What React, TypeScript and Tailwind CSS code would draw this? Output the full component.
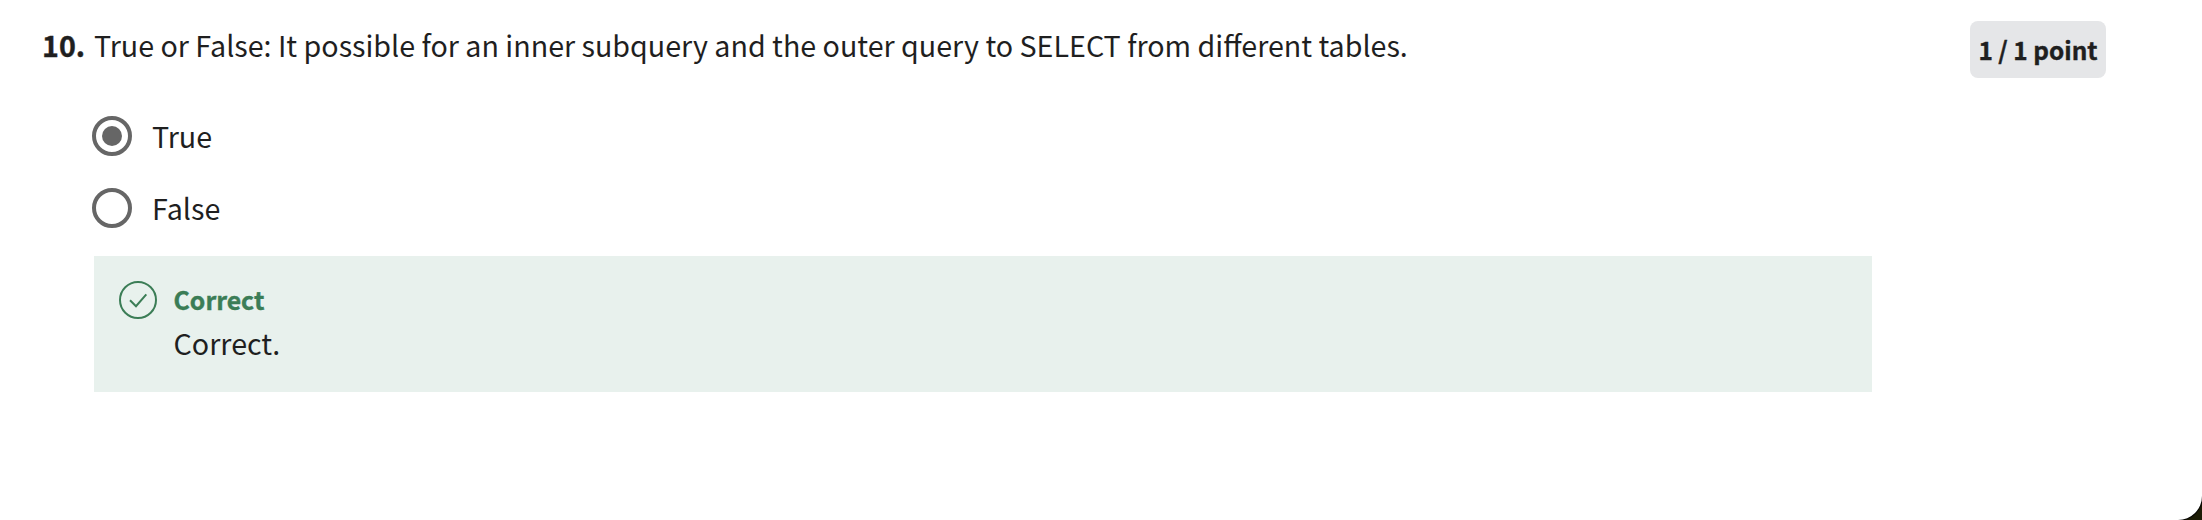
function Radio({ label, checked = false }: { label: string; checked?: boolean }) {
  return (
    <label className="flex h-10 items-center gap-5">
      <span role="radio" aria-checked={checked} className="flex size-10 items-center justify-center rounded-full border-4 border-[#666666]">
        {checked && <span className="size-5 rounded-full bg-[#666666]" />}
      </span>
      <span className="text-[28.65px] leading-10">{label}</span>
    </label>
  );
}

export default function App() {
  return (
    <div className="flex h-[520px] w-[2202px] bg-[#1c1b05] font-['Noto_Sans_CJK_SC',sans-serif] text-[#1f1f1f]">
      <main className="w-full rounded-br-[24px] bg-white pt-[21px] pl-[42px] shadow-[0_0_1px_1px_#000]">
        <div className="flex h-[95px] items-start">
          <span className="w-[52px] text-[28.65px] leading-[48px] font-bold [-webkit-text-stroke:0.4px]">10.</span>
          <p className="w-[1876px] text-[28.65px] leading-[48px] whitespace-nowrap">
            True or False: It possible for an inner subquery and the outer query to SELECT from different tables.
          </p>
          <div className="flex h-[57px] w-[136px] items-center justify-center rounded-[8px] bg-[#e5e6e8] pt-[2px] text-[24.4px] font-bold whitespace-nowrap [-webkit-text-stroke:0.4px]">
            1 / 1 point
          </div>
        </div>
        <div role="radiogroup" className="ml-[50px] flex flex-col gap-8">
          <Radio label="True" checked />
          <Radio label="False" />
        </div>
        <section className="mt-7 ml-[52px] flex h-[136px] w-[1778px] gap-[16.6px] bg-[#e8f1ed] pt-[25px] pl-[25px]">
          <svg viewBox="0 0 38 38" className="size-[38px] shrink-0" fill="none" stroke="#3b7d56" strokeWidth="2">
            <circle cx="19" cy="19" r="18" />
            <path d="M11 19.2 17 25.2 27.3 13.3" />
          </svg>
          <div>
            <p className="mb-[2px] text-[24.8px] leading-[36px] font-bold text-[#3b7d56] [-webkit-text-stroke:0.4px]">Correct</p>
            <p className="text-[28.65px] leading-[48px]">Correct.</p>
          </div>
        </section>
      </main>
    </div>
  );
}
